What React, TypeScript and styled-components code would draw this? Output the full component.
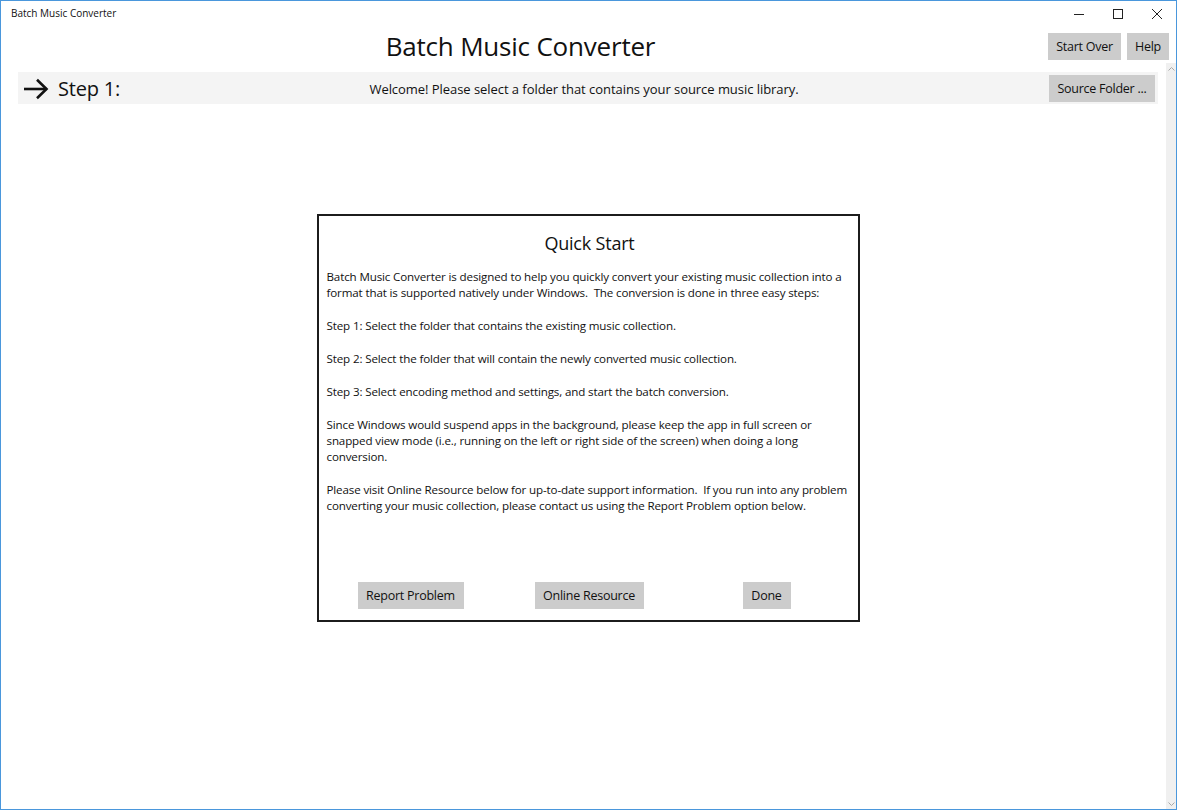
import styled, { createGlobalStyle } from 'styled-components';

const GlobalStyle = createGlobalStyle`
  html, body {
    margin: 0;
    padding: 0;
    background: #ffffff;
  }
  body {
    font-family: "Open Sans", "Noto Sans", sans-serif;
    color: #000;
  }
`;

const Window = styled.div`
  box-sizing: border-box;
  width: 1177px;
  height: 810px;
  border: 1px solid #4a97dc;
  background: #fff;
  display: flex;
  flex-direction: column;
  overflow: hidden;
`;

const TitleBar = styled.div`
  height: 28px;
  display: flex;
  align-items: center;
  justify-content: space-between;
  padding-left: 10px;
`;

const WindowTitle = styled.span`
  font-size: 10px;
  color: #111;
  margin-bottom: 4px;
`;

const WindowControls = styled.div`
  display: flex;
  height: 100%;
`;

const ControlButton = styled.div`
  width: 39px;
  height: 100%;
  display: flex;
  align-items: center;
  justify-content: center;
  padding-bottom: 2px;
  box-sizing: border-box;
`;

const Header = styled.div`
  height: 34px;
  display: flex;
  align-items: center;
  padding-right: 7px;
`;

const AppHeading = styled.h1`
  flex: 1;
  margin: 0 8px 0 0;
  text-align: center;
  font-size: 26px;
  font-weight: 400;
  letter-spacing: -0.2px;
  color: #111;
`;

const HeaderButtons = styled.div`
  display: flex;
  gap: 6px;
  margin-top: 1px;
`;

const GrayButton = styled.button<{ $width?: number }>`
  font-family: inherit;
  font-size: 12.5px;
  color: #111;
  background: #cccccc;
  border: none;
  border-radius: 0;
  height: 27px;
  padding: 0 2px;
  width: ${(p) => (p.$width ? `${p.$width}px` : 'auto')};
  display: inline-flex;
  align-items: center;
  justify-content: center;
  white-space: nowrap;
  letter-spacing: -0.25px;
  cursor: default;
`;

const MainRow = styled.div`
  flex: 1;
  display: flex;
  min-height: 0;
`;

const Content = styled.div`
  flex: 1;
  padding: 9px 8px 0 17px;
  display: flex;
  flex-direction: column;
  align-items: stretch;
`;

const StepBar = styled.div`
  height: 32px;
  background: #f4f4f4;
  display: grid;
  grid-template-columns: 107px 1fr 109px;
  align-items: center;
`;

const StepLabel = styled.div`
  display: flex;
  align-items: center;
  gap: 9px;
  padding-left: 5px;
  margin-top: 1px;
  font-size: 20px;
  color: #111;
  letter-spacing: -0.2px;
`;

const StepMessage = styled.div`
  text-align: center;
  font-size: 13px;
  color: #111;
  letter-spacing: -0.05px;
  margin-top: 2px;
  margin-right: 6px;
`;

const StepAction = styled.div`
  display: flex;
  justify-content: flex-end;
  padding-right: 3px;
`;

const DialogArea = styled.div`
  display: flex;
  justify-content: center;
  padding-top: 110px;
`;

const Dialog = styled.div`
  box-sizing: border-box;
  width: 543px;
  height: 408px;
  border: 2px solid #1c1c1c;
  padding: 0 5px 11px 8px;
  display: flex;
  flex-direction: column;
`;

const DialogTitle = styled.h2`
  margin: 14px 0 13px;
  text-align: center;
  font-size: 18px;
  font-weight: 400;
  line-height: 26px;
  color: #111;
  letter-spacing: -0.2px;
`;

const DialogBody = styled.div`
  flex: 1;
  font-size: 11.6px;
  line-height: 16px;
  color: #111;
  letter-spacing: -0.14px;
`;

const Paragraph = styled.p`
  margin: 0 0 17px;
`;

const DialogButtons = styled.div`
  display: grid;
  grid-template-columns: 184px 173px 1fr;
  justify-items: center;
  margin: 0 -5px 0 -8px;
`;

const Scrollbar = styled.div`
  width: 10px;
  background: #f0f0f0;
  display: flex;
  flex-direction: column;
  justify-content: space-between;
  align-items: center;
  padding: 4px 0 3px;
  box-sizing: border-box;
`;

function Chevron({ up }: { up?: boolean }) {
  return (
    <svg width="7" height="4" viewBox="0 0 7 4">
      <path
        d={up ? 'M0.5 3.5 L3.5 0.5 L6.5 3.5' : 'M0.5 0.5 L3.5 3.5 L6.5 0.5'}
        fill="none"
        stroke="#a8a8a8"
        strokeWidth="1"
      />
    </svg>
  );
}

function ForwardArrow() {
  return (
    <svg width="26" height="22" viewBox="0 0 26 22">
      <path d="M1 11 H23.5" stroke="#111" strokeWidth="2.6" fill="none" />
      <path d="M14 1.8 L23.5 11 L14 20.2" stroke="#111" strokeWidth="2.6" fill="none" strokeLinejoin="miter" />
    </svg>
  );
}

export default function App() {
  return (
    <>
      <GlobalStyle />
      <Window>
        <TitleBar>
          <WindowTitle>Batch Music Converter</WindowTitle>
          <WindowControls>
            <ControlButton>
              <svg width="10" height="10" viewBox="0 0 10 10">
                <path d="M0 5.5 H10" stroke="#222" strokeWidth="1" />
              </svg>
            </ControlButton>
            <ControlButton>
              <svg width="10" height="10" viewBox="0 0 10 10">
                <rect x="0.5" y="0.5" width="9" height="9" fill="none" stroke="#222" strokeWidth="1" />
              </svg>
            </ControlButton>
            <ControlButton>
              <svg width="10" height="10" viewBox="0 0 10 10">
                <path d="M0 0 L10 10 M10 0 L0 10" stroke="#222" strokeWidth="1" />
              </svg>
            </ControlButton>
          </WindowControls>
        </TitleBar>
        <Header>
          <AppHeading>Batch Music Converter</AppHeading>
          <HeaderButtons>
            <GrayButton $width={73}>Start Over</GrayButton>
            <GrayButton $width={42}>Help</GrayButton>
          </HeaderButtons>
        </Header>
        <MainRow>
          <Content>
            <StepBar>
              <StepLabel>
                <ForwardArrow />
                <span>Step 1:</span>
              </StepLabel>
              <StepMessage>Welcome! Please select a folder that contains your source music library.</StepMessage>
              <StepAction>
                <GrayButton $width={106}>Source Folder ...</GrayButton>
              </StepAction>
            </StepBar>
            <DialogArea>
              <Dialog>
                <DialogTitle>Quick Start</DialogTitle>
                <DialogBody>
                  <Paragraph>
                    Batch Music Converter is designed to help you quickly convert your existing music collection into a
                    format that is supported natively under Windows.&nbsp; The conversion is done in three easy steps:
                  </Paragraph>
                  <Paragraph>Step 1: Select the folder that contains the existing music collection.</Paragraph>
                  <Paragraph>Step 2: Select the folder that will contain the newly converted music collection.</Paragraph>
                  <Paragraph>Step 3: Select encoding method and settings, and start the batch conversion.</Paragraph>
                  <Paragraph>
                    Since Windows would suspend apps in the background, please keep the app in full screen or snapped
                    view mode (i.e., running on the left or right side of the screen) when doing a long conversion.
                  </Paragraph>
                  <Paragraph>
                    Please visit Online Resource below for up-to-date support information.&nbsp; If you run into any
                    problem converting your music collection, please contact us using the Report Problem option below.
                  </Paragraph>
                </DialogBody>
                <DialogButtons>
                  <GrayButton $width={106}>Report Problem</GrayButton>
                  <GrayButton $width={109}>Online Resource</GrayButton>
                  <GrayButton $width={48}>Done</GrayButton>
                </DialogButtons>
              </Dialog>
            </DialogArea>
          </Content>
          <Scrollbar>
            <Chevron up />
            <Chevron />
          </Scrollbar>
        </MainRow>
      </Window>
    </>
  );
}
